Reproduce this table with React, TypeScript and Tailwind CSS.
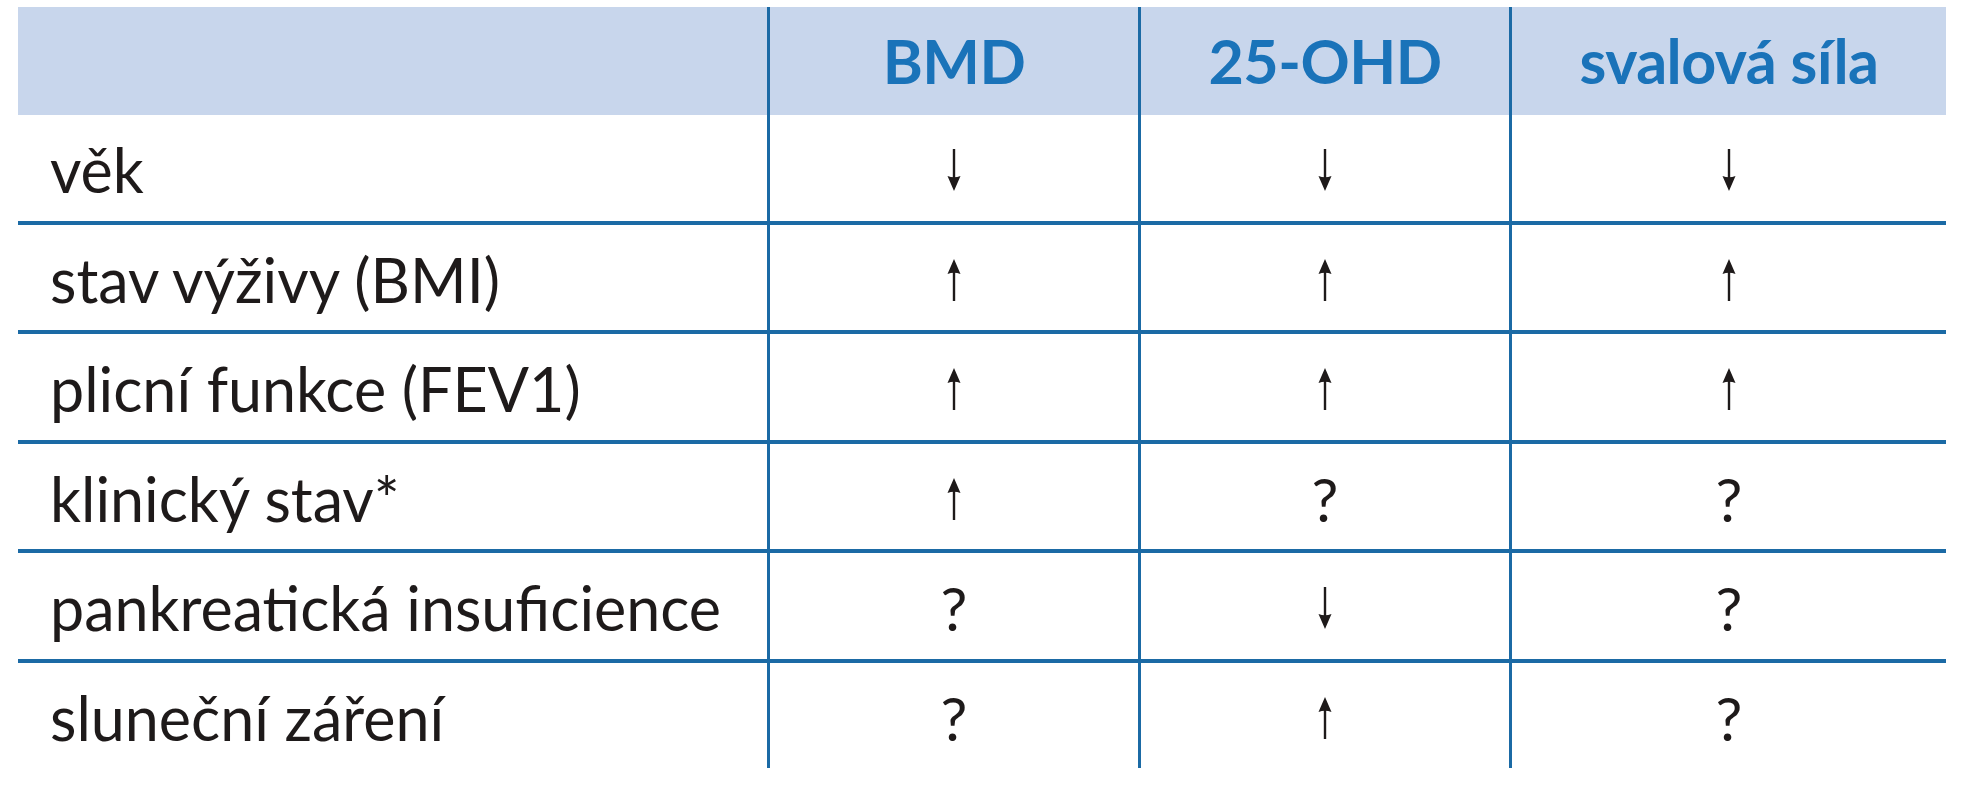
import React from "react";

const rows: string[][] = [
  ["věk", "↓", "↓", "↓"],
  ["stav výživy (BMI)", "↑", "↑", "↑"],
  ["plicní funkce (FEV1)", "↑", "↑", "↑"],
  ["klinický stav*", "↑", "?", "?"],
  ["pankreatická insuficience", "?", "↓", "?"],
  ["sluneční záření", "?", "↑", "?"],
];

const headers = ["BMD", "25-OHD", "svalová síla"];

function ArrowShape({ up }: { up: boolean }) {
  return (
    <svg
      className="absolute left-1/2 top-1/2 -translate-x-1/2 -translate-y-1/2"
      width="16"
      height="42"
      viewBox="0 0 16 42"
      aria-hidden="true"
    >
      {up ? (
        <>
          <line x1="8" y1="11" x2="8" y2="42" stroke="#1e1a1a" strokeWidth="2.4" />
          <path d="M1.5 15 Q8 12.5 14.5 15 L8 0 Z" fill="#1e1a1a" />
        </>
      ) : (
        <>
          <line x1="8" y1="0" x2="8" y2="31" stroke="#1e1a1a" strokeWidth="2.4" />
          <path d="M1.5 27 Q8 29.5 14.5 27 L8 42 Z" fill="#1e1a1a" />
        </>
      )}
    </svg>
  );
}

function Sym({ v }: { v: string }) {
  if (v === "?") {
    return <span className="text-[60px] leading-none text-[#1e1a1a]">?</span>;
  }
  return (
    <span className="relative inline-flex h-[48px] w-[24px] items-center justify-center">
      <span className="text-[44px] leading-none text-transparent [font-family:'DejaVu_Sans',sans-serif]">
        {v}
      </span>
      <ArrowShape up={v === "↑"} />
    </span>
  );
}

export default function App() {
  return (
    <div className="w-[1964px] h-[800px] bg-white pt-[7px] pl-[18px] [font-family:Lato,'Noto_Sans',sans-serif]">
      <div className="w-[1928px]">
        <div className="grid grid-cols-[749px_371px_371px_437px] h-[108px] bg-[#c8d6ec]">
          <div />
          {headers.map((h) => (
            <div
              key={h}
              className="flex items-center justify-center border-l-[3px] border-[#1b6aa5] text-[61px] font-bold text-[#1a73b9] tracking-[-0.5px]"
            >
              {h}
            </div>
          ))}
        </div>
        {rows.map((r, i) => (
          <div
            key={r[0]}
            className={
              i === 0
                ? "grid grid-cols-[749px_371px_371px_437px] h-[105.5px]"
                : "grid grid-cols-[749px_371px_371px_437px] h-[109.5px] border-t-4 border-[#1b6aa5]"
            }
          >
            <div className="flex items-center pl-[32px] pt-[4px] text-[61px] text-[#1e1a1a]">{r[0]}</div>
            {r.slice(1).map((v, j) => (
              <div key={j} className="flex items-center justify-center pt-[5px] border-l-[3px] border-[#1b6aa5]">
                <Sym v={v} />
              </div>
            ))}
          </div>
        ))}
      </div>
    </div>
  );
}
